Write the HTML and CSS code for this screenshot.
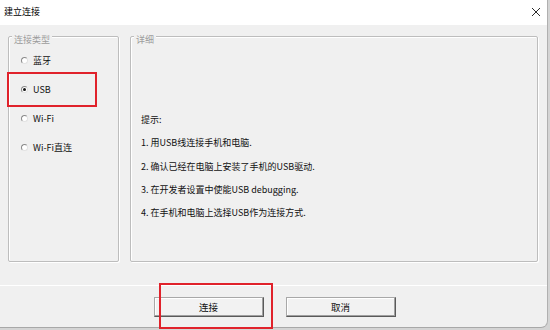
FILE: index.html
```html
<!DOCTYPE html>
<html lang="zh-CN">
<head>
<meta charset="utf-8">
<title>建立连接</title>
<link rel="stylesheet" href="styles.css">
</head>
<body>
<div class="window">
  <div class="titlebar">
    <span class="title">建立连接</span>
    <span class="close">
      <svg width="10" height="10" viewBox="0 0 10 10"><path d="M1 1 L9 9 M9 1 L1 9" stroke="#2b2b2b" stroke-width="1" fill="none"/></svg>
    </span>
  </div>
  <div class="main">
    <div class="group group-left">
      <span class="group-label">连接类型</span>
      <div class="options">
        <div class="opt"><span class="radio"></span><span>蓝牙</span></div>
        <div class="opt highlight"><span class="radio checked"></span><span>USB</span></div>
        <div class="opt"><span class="radio"></span><span>Wi-Fi</span></div>
        <div class="opt"><span class="radio"></span><span>Wi-Fi直连</span></div>
      </div>
    </div>
    <div class="group group-right">
      <span class="group-label">详细</span>
      <div class="details">
        <div>提示:</div>
        <div>1. 用USB线连接手机和电脑.</div>
        <div>2. 确认已经在电脑上安装了手机的USB驱动.</div>
        <div>3. 在开发者设置中使能USB debugging.</div>
        <div>4. 在手机和电脑上选择USB作为连接方式.</div>
      </div>
    </div>
  </div>
  <div class="footer">
    <div class="btn-wrap highlight-btn"><button class="btn">连接</button></div>
    <div class="btn-wrap"><button class="btn">取消</button></div>
  </div>
</div>
</body>
</html>
```
FILE: styles.css
```css
* { box-sizing: border-box; }
html, body { margin: 0; padding: 0; }
body {
  width: 550px;
  height: 330px;
  background: #d4d4d4;
  font-family: "Noto Sans CJK SC", "Microsoft YaHei", sans-serif;
  font-size: 9px;
  color: #111;
  overflow: hidden;
}
.window {
  width: 548px;
  height: 328px;
  background: #f0f0f0;
  border-bottom-right-radius: 7px;
  border-bottom: 1px solid #a8a8a8;
  border-right: 1px solid #b0b0b0;
  display: flex;
  flex-direction: column;
}
.titlebar {
  height: 25px;
  background: #ffffff;
  display: flex;
  align-items: center;
  justify-content: space-between;
  padding: 0 6px 2px 4px;
  flex: none;
}
.title { font-size: 9px; line-height: 12px; color: #000; }
.close { display: flex; width: 10px; height: 10px; margin-right: 0px; }
.main {
  display: flex;
  gap: 11px;
  padding: 11px 0 0 8px;
  height: 237px;
  flex: none;
}
.group {
  position: relative;
  height: 226px;
  border: 1px solid #bdbdbd;
  border-radius: 2px;
  box-shadow: 1px 1px 0 #fff, inset 1px 1px 0 #fff;
}
.group-left { width: 111px; }
.group-right { width: 408px; }
.group-label {
  position: absolute;
  top: -2px;
  left: 3px;
  padding: 0 2px;
  background: #f0f0f0;
  color: #9c9c9c;
  font-size: 9px;
  line-height: 10px;
}
.options { padding-top: 9px; display: flex; flex-direction: column; }
.opt {
  position: relative;
  height: 29px;
  display: flex;
  align-items: center;
  gap: 5px;
  padding-left: 12px;
  line-height: 12px;
}
.radio {
  width: 7px;
  height: 7px;
  border-radius: 50%;
  background: #fff;
  border: 1px solid;
  border-color: #8a8a8a #e2e2e2 #e2e2e2 #8a8a8a;
  display: flex;
  align-items: center;
  justify-content: center;
  flex: none;
}
.radio.checked::after {
  content: "";
  width: 3px;
  height: 3px;
  border-radius: 50%;
  background: #111;
}
.highlight::after {
  content: "";
  position: absolute;
  left: -2px;
  top: -3px;
  width: 86px;
  height: 31px;
  border: 2px solid #e0222b;
}
.details {
  padding: 71px 0 0 10px;
  line-height: 23.3px;
  color: #111;
}
.footer {
  margin-top: 23px;
  border-top: 1px solid #ffffff;
  padding-top: 11px;
  display: flex;
  justify-content: center;
  gap: 22px;
  padding-left: 2px;
}
.btn-wrap { position: relative; }
.btn {
  width: 110px;
  height: 20px;
  padding: 0;
  margin: 0;
  font-family: "Noto Sans CJK SC", "Microsoft YaHei", sans-serif;
  font-size: 9.5px;
  color: #111;
  background: #f2f2f2;
  border: 1px solid;
  border-color: #a8a8a8 #5a5a5a #5a5a5a #a8a8a8;
  box-shadow: inset -1px -1px 0 #a0a0a0, inset 1px 1px 0 #fff;
  border-radius: 0;
  line-height: 16px;
}
.highlight-btn::after {
  content: "";
  position: absolute;
  left: 5px;
  top: -14px;
  width: 110px;
  height: 42px;
  border: 2px solid #e0222b;
  pointer-events: none;
}
```
